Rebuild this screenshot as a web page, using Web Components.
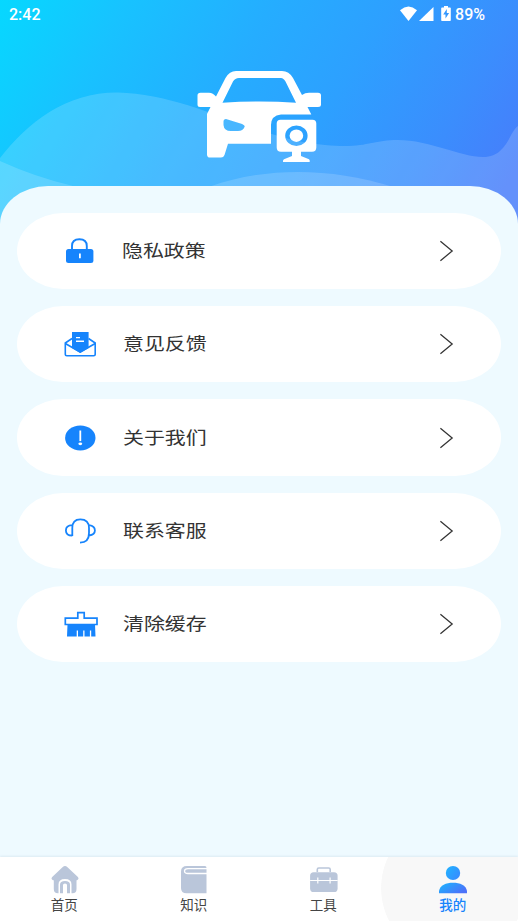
<!DOCTYPE html>
<html lang="zh-CN">
<head>
<meta charset="utf-8">
<title>我的</title>
<style>
html,body{margin:0;height:100%;overflow:hidden}
body{font-family:"Noto Sans CJK SC","Noto Sans",sans-serif;background:#eefaff}
</style>
</head>
<body>
<profile-page></profile-page>
<script>
const define = (name, html) => {
  const t = document.createElement('template');
  t.innerHTML = html;
  customElements.define(name, class extends HTMLElement {
    constructor() {
      super();
      this.attachShadow({mode: 'open'}).append(t.content.cloneNode(true));
    }
  });
};

define('status-bar', `
<style>
:host{display:flex;align-items:center;height:30px;padding:0 33px 0 9px;color:#fff;font:500 16px/30px Roboto,sans-serif;box-sizing:border-box}
.time{flex:1}
svg{display:block;margin-right:3px}
</style>
<span class="time">2:42</span>
<svg width="53" height="30" viewBox="399 0 53 30" fill="#fff">
<path d="M400 10.2Q408.500 3 417 10.200L408.500 21Z"/>
<path d="M433.500 7V21H419Z"/>
<path fill-rule="evenodd" d="M444 6h4v1.500h2q.8 0 .8.800v12q0 .8-.8.8h-8q-.8 0-.8-.8v-12q0-.8.800-.800h2zM446.800 9l-3.600 5.600h2.300v4l3.600-5.600h-2.300z"/>
</svg>
<span>89%</span>`);

define('page-header', `
<style>
:host{display:grid;height:232px;background:linear-gradient(121deg,#06d8ff 0%,#18c2ff 20%,#25adff 42%,#2da0ff 60%,#3b8dfd 80%,#477dfb 94%,#477bfb 100%)}
:host>*{grid-area:1/1}
svg{display:block}
</style>
<svg width="518" height="232" viewBox="0 0 518 232">
<g fill="#fff" fill-opacity=".16">
<path d="M0 158C28 122 67 92 118 92.500C190 94 256 139 325 145C367 149 370 140 398 140C430 140 460 157 483 157C507 157 509 132 518 126V232H0Z"/>
<path d="M0 161Q35 177 73 186V232H0Z"/>
<path d="M210 186.500C265 167 330 167 392 186.500V232H210Z"/>
</g>
<g fill="#fff">
<path fill-rule="evenodd" d="M236 71H282Q289 71 293 78L302 95Q305 92.700 309 92.700H318Q321 92.700 321 95.500V104.500Q321 107 318 107H307.500L311.300 114.400H281Q271 115.400 271 125V143.700H228L224.500 155Q223.500 157.600 221 157.600H210Q207 157.600 207 154.500V114L210.500 107H200Q197.500 107 197.500 104.500V95.500Q197.500 92.700 200.500 92.700H209Q213 92.700 216 96.500L225.500 78Q229.500 71 236 71ZM239 78Q235 78 233 81.500L222.500 102.700Q260 100.300 296 102.700L285.500 81.500Q283.500 78 281 78ZM226 119Q223.500 119 223.500 121.500V125Q224 131 231 131H238Q243 131 244.500 127Q245.500 125.500 242 124Z"/>
<path fill-rule="evenodd" d="M280.500 119.700H312.500Q316.300 119.700 316.300 123.500V147.500Q316.300 151.700 312 151.700H301V156L309 159.300Q310 160 309.700 162H283Q282.700 160 284 159.300L292 156V151.700H281Q276.700 151.700 276.700 147.500V123.500Q276.700 119.700 280.500 119.700ZM285.200 135.700A11.200 10.300 0 1 0 307.600 135.700A11.200 10.300 0 1 0 285.200 135.700Z"/>
<ellipse cx="296.400" cy="135.700" rx="6.800" ry="6.200"/>
</g></svg>
<status-bar></status-bar>`);

define('menu-card', `
<style>
:host{display:flex;align-items:center;height:76.300px;box-sizing:border-box;border-radius:46px/38px;background:#fff;padding-left:45px;padding-right:44px;color:#333}
.icon{flex:none;width:42px;height:34px}
.label{flex:1;margin:-2px 0 0 var(--label-gap,18.600px);font-size:17.600px;line-height:30px;white-space:nowrap}
.label span{display:inline-block;transform:scaleX(1.190);transform-origin:0 50%}
.arrow{display:block}
</style>
<div class="icon"><slot name="icon"></slot></div>
<div class="label"><span><slot></slot></span></div>
<svg class="arrow" width="18" height="24" viewBox="0 0 18 24" fill="none" stroke="#333" stroke-width="1.250"><path d="M1.400 2.300L13.200 12L1.400 21.700"/></svg>`);

define('tab-item', `
<style>
:host{display:flex;flex:1;flex-direction:column;align-items:center;box-sizing:border-box;padding-top:7px;font-size:13.500px;line-height:20px;color:#444}
:host([active]){color:#1684fc;font-weight:500;background:radial-gradient(circle at 72px 31px,#f8f8f8 71.500px,transparent 72.200px);margin-left:-8px;padding-left:8px}
.icon{height:29.500px}
.text{margin-right:1px}
</style>
<div class="icon"><slot name="icon"></slot></div>
<span class="text"><slot></slot></span>`);

define('tab-bar', `
<style>
:host{display:flex;height:64px;background:#fff;box-shadow:0 -1px 2px #dcebf3}
svg{display:block}
</style>
<tab-item><svg slot="icon" width="30" height="32" viewBox="49.500 864 30 32" fill="#bac6da">
<path fill-rule="evenodd" d="M64.500 866Q65.600 866 67 867.200L77.400 877Q79 879 76.500 880.200H76V889Q76 893.300 72 893.300H71V884.500Q71 879 64.500 879Q58 879 58 884.500V893.300H57.500Q53.300 893.300 53.300 889V880.200H52.500Q50 879 51.700 877L62 867.200Q63.400 866 64.500 866Z"/><path d="M59.500 893.300V884.700Q59.500 881 64.500 881Q69.500 881 69.500 884.700V893.300H66.500V885Q66.500 883.400 64.500 883.400Q62.500 883.400 62.500 885V893.300Z"/></svg>首页</tab-item>
<tab-item><svg slot="icon" width="28" height="32" viewBox="180 864 28 32"><path d="M187 866H205Q206.500 866 206.500 868V893.300H186.500Q181 893.300 181 888V871.500Q181 866 187 866Z" fill="#bac6da"/><path d="M207 868.600H188Q184.500 868.600 184.500 871Q184.500 873.500 188 873.500H207" stroke="#fff" fill="none" stroke-width="1.300"/></svg>知识</tab-item>
<tab-item><svg slot="icon" width="30" height="32" viewBox="308.500 864 30 32"><path d="M316.800 872V869.500Q316.800 868 318.300 868H328.200Q329.700 868 329.700 869.500V872" stroke="#bac6da" fill="none" stroke-width="1.600"/><rect x="309.600" y="872.200" width="27.500" height="19.800" rx="3.600" fill="#bac6da"/><path d="M309.600 880.500H337.200M317.300 877.500V883.500M329.600 877.500V883.500" stroke="#fff" stroke-width="1.200"/></svg>工具</tab-item>
<tab-item active><svg slot="icon" width="30" height="32" viewBox="438 864 30 32"><defs><linearGradient id="h" x1="0" y1="0" x2="1" y2=".7"><stop stop-color="#1fb5ff"/><stop offset="1" stop-color="#388bff"/></linearGradient><linearGradient id="b" x1="0" y1="0" x2="1" y2=".6"><stop stop-color="#18b7ff"/><stop offset="1" stop-color="#4c72f9"/></linearGradient></defs><ellipse cx="453" cy="873" rx="7.200" ry="7" fill="url(#h)"/><path d="M439 893.300V891C440 885 446 882.700 453 882.700S466 885 467 891V893.300Z" fill="url(#b)"/></svg>我的</tab-item>`);

define('profile-page', `
<style>
:host{display:flex;flex-direction:column;height:921px;width:518px;overflow:hidden;background:#eefaff}
page-header{flex:none}
main{flex:1;display:flex;flex-direction:column;gap:17px;margin-top:-45.600px;padding:26.400px 17px 0;border-radius:48px 48px 0 0/38px 38px 0 0;background:#eefaff}
menu-card:first-child{--label-gap:18px}
menu-card:last-child{--label-gap:19px}
svg{display:block}
tab-bar{flex:none}
</style>
<page-header></page-header>
<main>
<menu-card><svg slot="icon" width="42" height="34" viewBox="62 234 42 34"><path d="M72 250V246Q72 239.200 79.400 239.200Q86.800 239.200 86.800 246V250" fill="none" stroke="#1684fc" stroke-width="1.900"/><rect x="66" y="249" width="27.400" height="14" rx="2.500" fill="#1684fc"/><path d="M79.900 253.500V258.300" stroke="#fff" stroke-width="1.800"/></svg>隐私政策</menu-card>
<menu-card><svg slot="icon" width="42" height="34" viewBox="62 327 42 34"><path d="M72 338.500L65.300 343V354.500Q65.300 355.700 66.800 355.700H93.700Q95.200 355.700 95.200 354.500V343L88.500 338.500M65.300 343.500L80.200 352L95.200 343.500" fill="none" stroke="#1684fc" stroke-width="1.600"/><path d="M72 332H88.600V348L80.200 353L72 348Z" fill="#1684fc"/><path d="M76 337.600H80M76 341.300H84" stroke="#fff" stroke-width="1.400"/></svg>意见反馈</menu-card>
<menu-card><svg slot="icon" width="42" height="34" viewBox="62 420.500 42 34"><ellipse cx="80.300" cy="437.400" rx="15.200" ry="12.500" fill="#1684fc"/><path d="M80.300 430V440.600" stroke="#fff" stroke-width="1.800"/><ellipse cx="80.300" cy="443.300" rx="1.900" ry="1.400" fill="#fff"/></svg>关于我们</menu-card>
<menu-card><svg slot="icon" width="42" height="34" viewBox="62 514 42 34" fill="none" stroke="#1684fc" stroke-width="1.800"><path d="M72.300 536V528Q72.300 519.300 80.300 519.300Q89 519.300 89 528V533Q89 542.600 80 542.600M72.300 525.200Q65.900 525.500 65.900 530.400Q65.900 535.500 72.300 535.500M89 525.200Q94.900 526 94.900 530.400Q94.900 534.500 89 535.500"/></svg>联系客服</menu-card>
<menu-card><svg slot="icon" width="42" height="34" viewBox="62 607 42 34"><path d="M65.300 624.500V618.200H77.800V612.700H84.200V618.200H97V624.500Z" fill="#fff" stroke="#1684fc" stroke-width="1.700"/><path d="M67.500 624.500H95L95.500 636.500H91.200V630.500H89.900V636.500H84.500V630.500H83.200V636.500H78V630.500H76.700V636.500H67Z" fill="#1684fc"/></svg>清除缓存</menu-card>
</main>
<tab-bar></tab-bar>`);
</script>
</body>
</html>
